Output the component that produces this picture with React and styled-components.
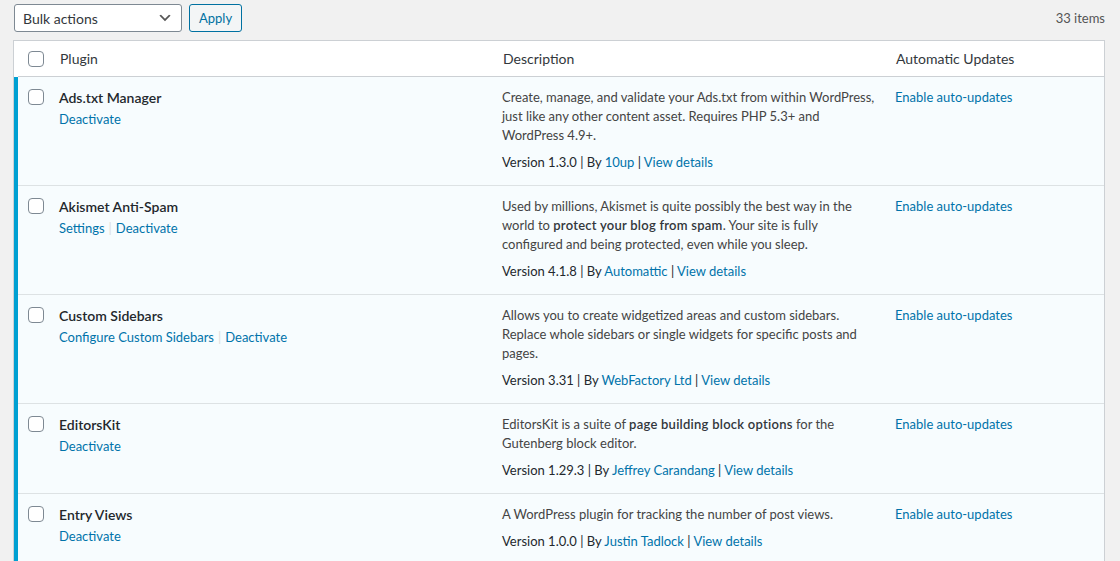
import styled, { createGlobalStyle } from "styled-components";

const GlobalStyle = createGlobalStyle`
    body {
        margin: 0;
        background: #f1f1f1;
        font-family: "Segoe UI", Lato, "Liberation Sans", sans-serif;
        font-size: 13px;
        line-height: 19px;
        color: #444;
    }
    * { box-sizing: border-box; }
`;

const Page = styled.div`
    padding: 4px 15px 0 13px;
`;

const TopBar = styled.div`
    display: flex;
    align-items: center;
    gap: 7px;
    height: 28px;
    margin-bottom: 8px;
    padding-left: 1px;
`;

const Select = styled.div`
    display: flex;
    align-items: center;
    justify-content: space-between;
    width: 168px;
    height: 28px;
    padding: 0 8px 0 8px;
    background: #fff;
    border: 1px solid #7e8993;
    border-radius: 3px;
    color: #32373c;
    font-size: 14px;
`;

const Button = styled.button`
    height: 28px;
    padding: 0 9px;
    background: #f3f5f6;
    border: 1px solid #0071a1;
    border-radius: 3px;
    color: #0071a1;
    font-family: inherit;
    font-size: 13px;
`;

const Count = styled.span`
    margin-left: auto;
    color: #555;
    font-size: 13px;
`;

const Table = styled.div`
    border: 1px solid #ccd0d4;
    background: #fff;
`;

const Row = styled.div`
    display: grid;
    grid-template-columns: 31px 443px 393px 1fr;
    border-left: 4px solid ${(p) => (p.$active ? "#00a0d2" : "transparent")};
    background: ${(p) => (p.$active ? "#f7fcfe" : "#fff")};
    box-shadow: inset 0 -1px 0 ${(p) => (p.$head ? "#ccd0d4" : "rgba(0, 0, 0, 0.1)")};
`;

const HeadCell = styled.div`
    padding: 8px 10px 9px 11px;
    color: #32373c;
    font-size: 14px;
    line-height: 19px;
`;

const CheckCell = styled.div`
    padding: ${(p) => (p.$head ? "10px" : "12px")} 0 0 10px;
`;

const Checkbox = styled.span`
    display: block;
    width: 16px;
    height: 16px;
    border: 1px solid #7e8993;
    border-radius: 4px;
    background: #fff;
`;

const Cell = styled.div`
    padding: 11px 10px 14px 10px;
`;

const Name = styled.strong`
    display: block;
    margin-bottom: 3px;
    color: #23282d;
    font-size: 14px;
    font-weight: 600;
    line-height: 19px;
`;

const Actions = styled.div`
    color: #ddd;
`;

const Link = styled.a`
    color: #0073aa;
    text-decoration: none;
`;

const Sep = styled.span`
    margin: 0 4px;
    color: #ddd;
`;

const Desc = styled.p`
    margin: 0 0 8px;
    color: #444;

    strong {
        font-weight: 600;
        letter-spacing: 0.25px;
        color: #32373c;
    }
`;

const Meta = styled.div`
    color: #23282d;
`;

const Chevron = () => (
    <svg width="16" height="16" viewBox="0 0 20 20" fill="#555">
        <path d="M5 6l5 5 5-5 2 1-7 7-7-7z" />
    </svg>
);

const plugins = [
    {
        name: "Ads.txt Manager",
        actions: ["Deactivate"],
        desc: <>Create, manage, and validate your Ads.txt from within WordPress, just like any other content asset. Requires PHP 5.3+ and WordPress 4.9+.</>,
        version: "1.3.0",
        author: "10up",
    },
    {
        name: "Akismet Anti-Spam",
        actions: ["Settings", "Deactivate"],
        desc: <>Used by millions, Akismet is quite possibly the best way in the world to <strong>protect your blog from spam</strong>. Your site is fully configured and being protected, even while you sleep.</>,
        version: "4.1.8",
        author: "Automattic",
    },
    {
        name: "Custom Sidebars",
        actions: ["Configure Custom Sidebars", "Deactivate"],
        desc: <>Allows you to create widgetized areas and custom sidebars. Replace whole sidebars or single widgets for specific posts and pages.</>,
        version: "3.31",
        author: "WebFactory Ltd",
    },
    {
        name: "EditorsKit",
        actions: ["Deactivate"],
        desc: <>EditorsKit is a suite of <strong>page building block options</strong> for the Gutenberg block editor.</>,
        version: "1.29.3",
        author: "Jeffrey Carandang",
    },
    {
        name: "Entry Views",
        actions: ["Deactivate"],
        desc: <>A WordPress plugin for tracking the number of post views.</>,
        version: "1.0.0",
        author: "Justin Tadlock",
    },
];

const App = () => {
    return (
        <Page>
            <GlobalStyle />
            <TopBar>
                <Select>
                    <span>Bulk actions</span>
                    <Chevron />
                </Select>
                <Button>Apply</Button>
                <Count>33 items</Count>
            </TopBar>
            <Table>
                <Row $head>
                    <CheckCell $head>
                        <Checkbox />
                    </CheckCell>
                    <HeadCell>Plugin</HeadCell>
                    <HeadCell>Description</HeadCell>
                    <HeadCell>Automatic Updates</HeadCell>
                </Row>
                {plugins.map((p) => (
                    <Row $active key={p.name}>
                        <CheckCell>
                            <Checkbox />
                        </CheckCell>
                        <Cell>
                            <Name>{p.name}</Name>
                            <Actions>
                                {p.actions.map((a, i) => (
                                    <span key={a}>
                                        {i > 0 && <Sep>|</Sep>}
                                        <Link href="#">{a}</Link>
                                    </span>
                                ))}
                            </Actions>
                        </Cell>
                        <Cell>
                            <Desc>{p.desc}</Desc>
                            <Meta>
                                Version {p.version} | By <Link href="#">{p.author}</Link> | <Link href="#">View details</Link>
                            </Meta>
                        </Cell>
                        <Cell>
                            <Link href="#">Enable auto-updates</Link>
                        </Cell>
                    </Row>
                ))}
            </Table>
        </Page>
    );
};

export default App;
